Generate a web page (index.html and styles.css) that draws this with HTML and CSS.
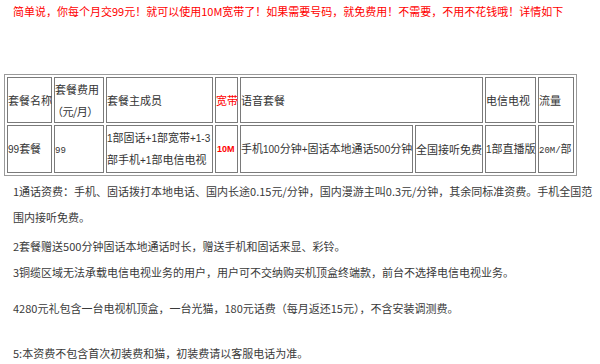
FILE: index.html
```html
<!DOCTYPE html>
<html lang="zh-CN">
<head>
<meta charset="utf-8">
<title>套餐</title>
<link rel="stylesheet" href="styles.css">
</head>
<body>
<div class="page">
  <div class="title">简单说，你每个月交99元！就可以使用10M宽带了！如果需要号码，就免费用！不需要，不用不花钱哦！详情如下</div>
  <table class="plan">
    <colgroup>
      <col class="c1"><col class="c2"><col class="c3"><col class="c4"><col class="c5"><col class="c6"><col class="c7"><col class="c8">
    </colgroup>
    <tr class="head">
      <td>套餐名称</td>
      <td class="two">套餐费用<br><span class="unit">（元/月）</span></td>
      <td>套餐主成员</td>
      <td class="red">宽带</td>
      <td colspan="2">语音套餐</td>
      <td>电信电视</td>
      <td>流量</td>
    </tr>
    <tr class="body">
      <td><span class="n">99</span>套餐</td>
      <td><span class="small">99</span></td>
      <td class="two"><span class="n">1</span>部固话<span class="n">+1</span>部宽带<span class="n">+1-3</span><br>部手机<span class="n">+1</span>部电信电视</td>
      <td class="bw">10M</td>
      <td>手机<span class="n">100</span>分钟<span class="n">+</span>固话本地通话<span class="n">500</span>分钟</td>
      <td>全国接听免费</td>
      <td><span class="n">1</span>部直播版</td>
      <td><span class="small">20M/</span>部</td>
    </tr>
  </table>
  <div class="notes">
    <p class="n1">1通话资费：手机、固话拨打本地电话、国内长途0.15元/分钟，国内漫游主叫0.3元/分钟，其余同标准资费。手机全国范<br>围内接听免费。</p>
    <p class="n2">2套餐赠送500分钟固话本地通话时长，赠送手机和固话来显、彩铃。</p>
    <p class="n3">3铜缆区域无法承载电信电视业务的用户，用户可不交纳购买机顶盒终端款，前台不选择电信电视业务。</p>
    <p class="n4">4280元礼包含一台电视机顶盒，一台光猫，180元话费（每月返还15元），不含安装调测费。</p>
    <p class="n5">5:本资费不包含首次初装费和猫，初装费请以客服电话为准。</p>
  </div>
</div>
</body>
</html>
```
FILE: styles.css
```css
html, body {
  margin: 0;
  padding: 0;
  background: #fff;
}
body {
  font-family: "Noto Sans CJK SC", "Noto Sans", sans-serif;
  font-size: 11px;
  color: #333;
}
.page {
  width: 600px;
  height: 364px;
  overflow: hidden;
  padding-top: 1px;
  box-sizing: border-box;
}
.title {
  color: #f00;
  line-height: 20px;
  padding-left: 13px;
  white-space: nowrap;
}
.plan {
  margin: 53px 0 0 4px;
  border: 1px solid #9a9a9a;
  border-spacing: 2px;
  table-layout: fixed;
  width: 573px;
}
.c1 { width: 45px; }
.c2 { width: 50px; }
.c3 { width: 107px; }
.c4 { width: 23px; }
.c5 { width: 173px; }
.c6 { width: 68px; }
.c7 { width: 51px; }
.c8 { width: 36px; }
.plan td {
  box-sizing: border-box;
  border: 1px solid #7a7a7a;
  padding: 0;
  vertical-align: middle;
  text-align: left;
  color: #333;
  line-height: 22px;
  white-space: nowrap;
}
.plan td.two {
  line-height: 21px;
}
.head td { height: 46px; }
.head td.two { line-height: 22px; }
.body td { height: 48px; }
.unit {
  display: inline-block;
  margin-left: -3px;
  letter-spacing: -0.5px;
}
.plan td.red { color: #f00; }
.plan td.bw {
  color: #f00;
  font-family: "Liberation Sans", sans-serif;
  font-weight: bold;
  font-size: 9px;
  padding-left: 1px;
}
.n {
  font-family: "Liberation Sans", sans-serif;
  font-size: 10px;
}
.small {
  font-family: "Liberation Mono", monospace;
  font-size: 9px;
}
.notes {
  padding-left: 13px;
}
.notes p {
  margin: 0;
  line-height: 26px;
  white-space: nowrap;
  color: #3a3a3a;
}
.n1 { margin-top: 2px !important; }
.n2 { margin-top: 3px !important; }
.n3 { margin-top: 0 !important; }
.n4 { margin-top: 10px !important; }
.n5 { margin-top: 19px !important; }
```
